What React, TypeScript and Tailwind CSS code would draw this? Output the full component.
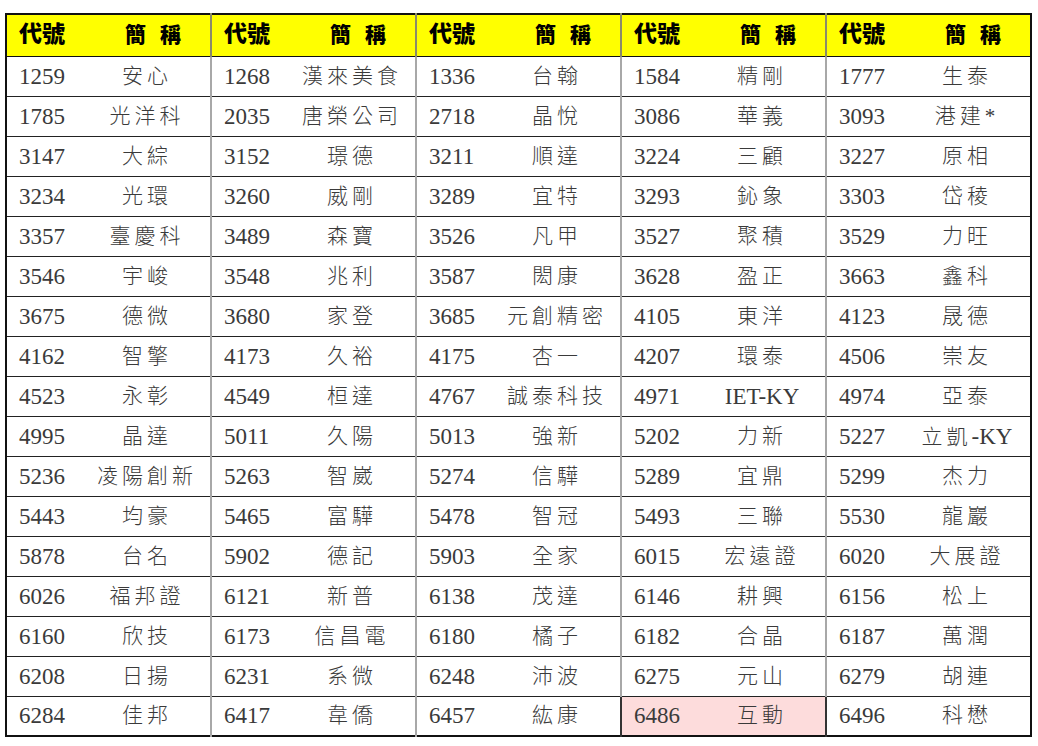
import React from "react";

type Pair = [string, string];

const rows: Pair[][] = [
  [["1259", "安心"], ["1268", "漢來美食"], ["1336", "台翰"], ["1584", "精剛"], ["1777", "生泰"]],
  [["1785", "光洋科"], ["2035", "唐榮公司"], ["2718", "晶悅"], ["3086", "華義"], ["3093", "港建*"]],
  [["3147", "大綜"], ["3152", "璟德"], ["3211", "順達"], ["3224", "三顧"], ["3227", "原相"]],
  [["3234", "光環"], ["3260", "威剛"], ["3289", "宜特"], ["3293", "鈊象"], ["3303", "岱稜"]],
  [["3357", "臺慶科"], ["3489", "森寶"], ["3526", "凡甲"], ["3527", "聚積"], ["3529", "力旺"]],
  [["3546", "宇峻"], ["3548", "兆利"], ["3587", "閎康"], ["3628", "盈正"], ["3663", "鑫科"]],
  [["3675", "德微"], ["3680", "家登"], ["3685", "元創精密"], ["4105", "東洋"], ["4123", "晟德"]],
  [["4162", "智擎"], ["4173", "久裕"], ["4175", "杏一"], ["4207", "環泰"], ["4506", "崇友"]],
  [["4523", "永彰"], ["4549", "桓達"], ["4767", "誠泰科技"], ["4971", "IET-KY"], ["4974", "亞泰"]],
  [["4995", "晶達"], ["5011", "久陽"], ["5013", "強新"], ["5202", "力新"], ["5227", "立凱-KY"]],
  [["5236", "凌陽創新"], ["5263", "智崴"], ["5274", "信驊"], ["5289", "宜鼎"], ["5299", "杰力"]],
  [["5443", "均豪"], ["5465", "富驊"], ["5478", "智冠"], ["5493", "三聯"], ["5530", "龍巖"]],
  [["5878", "台名"], ["5902", "德記"], ["5903", "全家"], ["6015", "宏遠證"], ["6020", "大展證"]],
  [["6026", "福邦證"], ["6121", "新普"], ["6138", "茂達"], ["6146", "耕興"], ["6156", "松上"]],
  [["6160", "欣技"], ["6173", "信昌電"], ["6180", "橘子"], ["6182", "合晶"], ["6187", "萬潤"]],
  [["6208", "日揚"], ["6231", "系微"], ["6248", "沛波"], ["6275", "元山"], ["6279", "胡連"]],
  [["6284", "佳邦"], ["6417", "韋僑"], ["6457", "紘康"], ["6486", "互動"], ["6496", "科懋"]],
];

// 6486 互動 is highlighted in the source sheet
const highlighted = "6486";

const font = { fontFamily: '"Liberation Serif", "Noto Sans CJK TC", serif' };

// CJK characters get extra spacing, latin parts (IET-KY, -KY) don't
function Name({ text }: { text: string }) {
  const parts = text.split(/([A-Za-z-]+)/).filter(Boolean);
  return (
    <>
      {parts.map((p, i) =>
        /[A-Za-z-]/.test(p) ? (
          <span key={i} className="tracking-normal text-[23px]">
            {p}
          </span>
        ) : (
          <span key={i}>{p}</span>
        )
      )}
    </>
  );
}

export default function App() {
  return (
    <div className="bg-white w-[1038px] h-[746px] pt-[13px] pl-[5px]" style={font}>
      <table className="table-fixed border-collapse w-[1023px] border-2 border-[#111]">
        <colgroup>
          {[0, 1, 2, 3, 4].map((i) => (
            <React.Fragment key={i}>
              <col className="w-[78px]" />
              <col className="w-[127px]" />
            </React.Fragment>
          ))}
        </colgroup>
        <thead>
          <tr className="h-[42px] bg-[#ffff00] border-b border-[#111]">
            {[0, 1, 2, 3, 4].map((i) => (
              <React.Fragment key={i}>
                <th
                  className={`text-left pl-[12px] text-[23px] font-black text-black ${
                    i > 0 ? "border-l-2 border-[#8a8a6a]" : ""
                  }`}
                >
                  代號
                </th>
                <th className="text-[21px] font-black text-black">
                  <span className="inline-flex gap-[14px] pl-[12px]">
                    <span>簡</span>
                    <span>稱</span>
                  </span>
                </th>
              </React.Fragment>
            ))}
          </tr>
        </thead>
        <tbody>
          {rows.map((row, r) => (
            <tr key={r} className="h-[40px] border-b border-[#222]">
              {row.map(([code, name], i) => {
                const hl = code === highlighted;
                return (
                  <React.Fragment key={code}>
                    <td
                      className={`pl-[12px] text-[23px] text-[#3a3a3a] leading-none ${
                        i > 0 ? "border-l-2" : ""
                      } ${hl ? "bg-[#fddcdc] border-[#333]" : "border-[#a8a8a8]"}`}
                    >
                      {code}
                    </td>
                    <td
                      className={`text-center text-[21px] tracking-[4px] text-[#3a3a3a] leading-none font-light ${
                        hl ? "bg-[#fddcdc] border-r-2 border-[#333]" : ""
                      }`}
                    >
                      <Name text={name} />
                    </td>
                  </React.Fragment>
                );
              })}
            </tr>
          ))}
        </tbody>
      </table>
    </div>
  );
}
